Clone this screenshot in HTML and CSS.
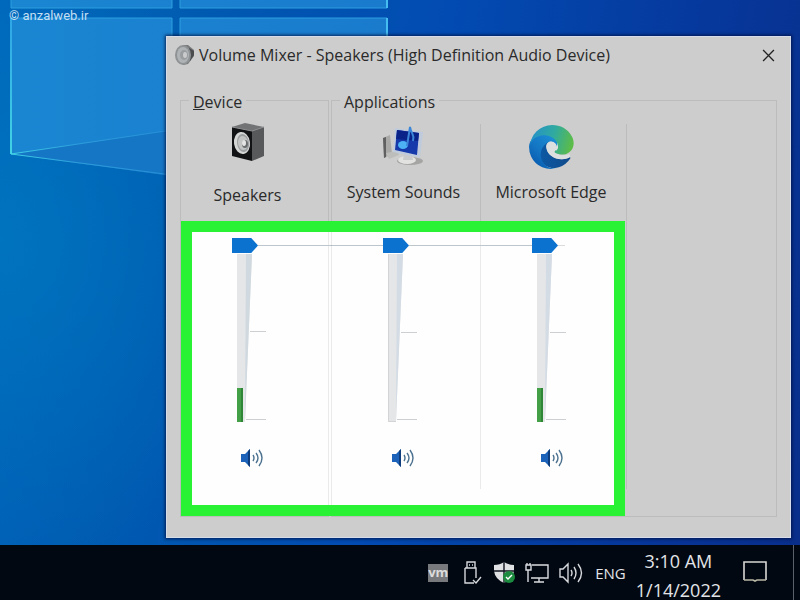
FILE: index.html
```html
<!DOCTYPE html>
<html lang="en">
<head>
<meta charset="utf-8">
<title>Volume Mixer</title>
<link rel="stylesheet" href="styles.css">
</head>
<body>
<svg class="wallpaper" viewBox="0 0 800 600" preserveAspectRatio="none" aria-hidden="true">
  <defs>
    <linearGradient id="pane" x1="0" y1="0" x2="1" y2="0">
      <stop offset="0" stop-color="#1a86d2"/>
      <stop offset="1" stop-color="#1a7bcd"/>
    </linearGradient>
    <linearGradient id="edge" x1="0" y1="18" x2="0" y2="154" gradientUnits="userSpaceOnUse">
      <stop offset="0" stop-color="#2fa5e6"/>
      <stop offset="1" stop-color="#41d3e4"/>
    </linearGradient>
    <linearGradient id="ray" x1="11" y1="0" x2="172" y2="0" gradientUnits="userSpaceOnUse">
      <stop offset="0" stop-color="#3fd0e6"/>
      <stop offset=".4" stop-color="#2c9edc"/>
      <stop offset="1" stop-color="#2590d6"/>
    </linearGradient>
  </defs>
  <path d="M11 0H172V8H11ZM180 0H387V8H180Z" fill="url(#pane)"/>
  <path d="M11 18H172V176L11 154ZM180 18H387V140H180Z" fill="url(#pane)"/>
  <path d="M11 154L172 130V176Z" fill="#1676c6"/>
  <path d="M11 154L172 130M11 154L172 175" stroke="url(#ray)" fill="none"/>
  <path d="M11 0V8H172V0M180 0V8H387V0M172 40V18H11M180 40V18H387V40" stroke="#2d9fe0" fill="none"/>
  <path d="M11 18V154" stroke="url(#edge)" stroke-width="2" fill="none"/>
  <path d="M387 0V8M387 18V40" stroke="#45bdf0" stroke-width="2" fill="none"/>
</svg>
<span class="watermark">© anzalweb.ir</span>

<main class="desktop">
  <section class="window" aria-labelledby="window-title">
    <header class="titlebar">
      <svg class="title-icon" viewBox="0 0 20 20" aria-hidden="true">
        <path d="M8 0H13L19 5V11L13 19L8 20Z" fill="#77797b"/>
        <path d="M14 3L19 6V10L15 16Z" fill="#4a4c4e"/>
        <ellipse cx="8" cy="10" rx="8" ry="10" fill="#8f9294"/>
        <ellipse cx="8" cy="10" rx="6" ry="8" fill="#b0b3b5"/>
        <ellipse cx="9" cy="10" rx="4" ry="5" fill="#999da0"/>
        <ellipse cx="10" cy="10" rx="2" ry="3" fill="#c9cbcc"/>
      </svg>
      <h1 id="window-title">Volume Mixer - Speakers (High Definition Audio Device)</h1>
      <button class="close" type="button" aria-label="Close">
        <svg viewBox="0 0 12 12"><path d="M1 1L11 11M11 1L1 11" stroke="#222" stroke-width="1.2"/></svg>
      </button>
    </header>

    <div class="mixer">
      <fieldset class="group">
        <legend><u>D</u>evice</legend>
        <div class="channel channel-device">
          <svg class="channel-icon" viewBox="0 0 46 46" aria-hidden="true">
            <path d="M7 3L20 -1L39 3L27 7Z" fill="#727375"/>
            <path d="M7 3L27 7V37L7 32Z" fill="#121314"/>
            <path d="M27 7L39 3V32L27 37Z" fill="#58595b"/>
            <path d="M7 3L27 7L39 3" stroke="#8b8c8e" fill="none"/>
            <ellipse cx="17" cy="19" rx="8" ry="11" fill="#d5d6d6" transform="rotate(-8 17 19)"/>
            <ellipse cx="18" cy="19" rx="6" ry="9" fill="#9da0a1" transform="rotate(-8 18 19)"/>
            <ellipse cx="18" cy="19" rx="5" ry="7" fill="#c2c4c4" transform="rotate(-8 18 19)"/>
            <ellipse cx="20" cy="20" rx="3" ry="4" fill="#6a6d6e"/>
            <ellipse cx="19" cy="19" rx="2" ry="3" fill="#e6e6e6"/>
          </svg>
          <label class="name" for="vol-speakers">Speakers</label>
          <div class="slider">
            <svg class="track" viewBox="0 0 36 184" aria-hidden="true">
              <path d="M26 7.5H153" stroke="#bcc6cc"/>
              <path d="M5 16H20L13 184H5Z" fill="#e5e6e8"/>
              <path d="M14 16H20L13 181Z" fill="#cfd9df"/>
              <path d="M18 93.5H34M14 181.5H34" stroke="#cdd0d2"/>
              <path d="M5 150H11V184H5Z" fill="#43a047"/>
              <path d="M9 150H11V184H9Z" fill="#2f8636"/>
            </svg>
            <input id="vol-speakers" type="range" min="0" max="100" value="100">
          </div>
          <button class="mute" type="button" aria-label="Mute Speakers">
            <svg viewBox="0 0 24 20"><path d="M1 6H5L10 1V19L5 14H1Z" fill="#1c62b8"/><path d="M8 3L10 1V19L8 17Z" fill="#0d3d7d"/><path d="M13 7Q15 10 13 13M16 5Q20 10 16 15M19 2Q25 10 19 18" stroke="#4c7290" stroke-width="1.4" fill="none"/></svg>
          </button>
        </div>
      </fieldset>

      <fieldset class="group group-apps">
        <legend>Applications</legend>
        <div class="channel">
          <svg class="channel-icon" viewBox="0 0 46 46" aria-hidden="true">
            <path d="M2 14L9 11L11 30L3 34Z" fill="#a9a9a7"/>
            <path d="M2 14L5 13V33L3 34Z" fill="#5f605f"/>
            <path d="M5 29L16 27L18 31L8 35Z" fill="#bdbdbb"/>
            <ellipse cx="29" cy="37" rx="13" ry="4" fill="#a5a5a4"/>
            <ellipse cx="26" cy="36" rx="9" ry="4" fill="#e2e2e1"/>
            <path d="M23 29L31 30L32 36H22Z" fill="#c9cacc"/>
            <path d="M14 4L42 8L39 34L12 28Z" fill="#bfcbdc"/>
            <path d="M16 6L38 9L36 31L14 26Z" fill="#1538aa"/>
            <path d="M16 6L38 9L37 17L15 15Z" fill="#0a2388"/>
            <ellipse cx="22" cy="21" rx="5" ry="4" fill="#4cb2f5"/>
            <path d="M26 22L29 3C30 10 34 10 32 17" stroke="#3b86d8" stroke-width="2" fill="none"/>
          </svg>
          <label class="name" for="vol-system">System Sounds</label>
          <div class="slider">
            <svg class="track" viewBox="0 0 36 184" aria-hidden="true">
              <path d="M26 7.5H149" stroke="#bcc6cc"/>
              <path d="M5 16H20L13 184H5Z" fill="#e5e6e8"/>
              <path d="M14 16H20L13 181Z" fill="#d3dbe4"/>
              <path d="M18 94.5H34M14 181.5H34" stroke="#cdd0d2"/>
              <path d="M5.500 16V183.500H13" stroke="#d3d4d6" fill="none"/>
            </svg>
            <input id="vol-system" type="range" min="0" max="100" value="100">
          </div>
          <button class="mute" type="button" aria-label="Mute System Sounds">
            <svg viewBox="0 0 24 20"><path d="M1 6H5L10 1V19L5 14H1Z" fill="#1c62b8"/><path d="M8 3L10 1V19L8 17Z" fill="#0d3d7d"/><path d="M13 7Q15 10 13 13M16 5Q20 10 16 15M19 2Q25 10 19 18" stroke="#4c7290" stroke-width="1.4" fill="none"/></svg>
          </button>
        </div>
        <div class="channel">
          <svg class="channel-icon" viewBox="-6 -6 268 268" aria-hidden="true">
            <defs>
              <linearGradient id="e1" x1="63" y1="177" x2="241" y2="177" gradientUnits="userSpaceOnUse"><stop offset="0" stop-color="#0c59a4"/><stop offset="1" stop-color="#114a8b"/></linearGradient>
              <linearGradient id="e2" x1="157" y1="99" x2="46" y2="220" gradientUnits="userSpaceOnUse"><stop offset="0" stop-color="#1b8bd2"/><stop offset=".6" stop-color="#1476c4"/><stop offset="1" stop-color="#0b62b4"/></linearGradient>
              <linearGradient id="e3" x1="20" y1="70" x2="245" y2="130" gradientUnits="userSpaceOnUse"><stop offset="0" stop-color="#2694c4"/><stop offset=".5" stop-color="#30aaa0"/><stop offset="1" stop-color="#5cbc48"/></linearGradient>
            </defs>
            <circle cx="146" cy="136" r="46" fill="#dcdfe0"/>
            <path fill="url(#e1)" d="M236 188a94 94 0 0 1-10 5 102 102 0 0 1-36 6c-47 0-89-32-89-74a31 31 0 0 1 16-27c-43 2-54 46-54 72 0 74 68 81 83 81 8 0 20-2 27-5l1 0a128 128 0 0 0 67-53 4 4 0 0 0-5-5z"/>
            <path fill="url(#e2)" d="M106 241a79 79 0 0 1-23-21 81 81 0 0 1 30-120c3-2 9-4 16-4a33 33 0 0 1 26 13 33 33 0 0 1 7 19c0-1 25-80-81-80-44 0-81 42-81 79a130 130 0 0 0 12 56 128 128 0 0 0 156 67 75 75 0 0 1-62-8z"/>
            <path fill="#dcdfe0" d="M113 100c-12 8-14 22-12 32 5 40 45 67 89 67 20 0 40-6 50-14l-6-16c-20 10-60 12-79-6-3-3-5-6-5-8 0-4 3-6 5-10 8-14 5-28-4-37-10-11-26-13-38-8z"/>
            <path fill="url(#e3)" d="M152 149c-1 1-3 3-3 6 0 3 2 6 5 8 15 10 43 9 43 9a62 62 0 0 0 31-9 64 64 0 0 0 32-55c0-23-8-38-12-44C227 23 182 0 134 0A128 128 0 0 0 6 126c0-36 37-66 81-66 3 0 24 0 43 10 17 9 26 20 32 30 6 11 7 25 7 30 0 6-3 14-10 19z"/>
          </svg>
          <label class="name" for="vol-edge">Microsoft Edge</label>
          <div class="slider">
            <svg class="track" viewBox="0 0 36 184" aria-hidden="true">
              <path d="M26 7.5H33" stroke="#d8dcdf"/>
              <path d="M5 16H20L13 184H5Z" fill="#e5e6e8"/>
              <path d="M14 16H20L13 181Z" fill="#d3dbe4"/>
              <path d="M18 94.5H34M14 181.5H34" stroke="#cdd0d2"/>
              <path d="M5 150H11V184H5Z" fill="#43a047"/>
              <path d="M9 150H11V184H9Z" fill="#2f8636"/>
            </svg>
            <input id="vol-edge" type="range" min="0" max="100" value="100">
          </div>
          <button class="mute" type="button" aria-label="Mute Microsoft Edge">
            <svg viewBox="0 0 24 20"><path d="M1 6H5L10 1V19L5 14H1Z" fill="#1c62b8"/><path d="M8 3L10 1V19L8 17Z" fill="#0d3d7d"/><path d="M13 7Q15 10 13 13M16 5Q20 10 16 15M19 2Q25 10 19 18" stroke="#4c7290" stroke-width="1.4" fill="none"/></svg>
          </button>
        </div>
      </fieldset>
      <div class="highlight-fill"></div>
      <div class="highlight-ring"></div>
    </div>
  </section>
</main>

<footer class="taskbar">
  <div class="tray">
    <span class="vm">vm</span>
    <svg width="20" height="24" viewBox="0 0 20 24" fill="none" stroke="#d6d8dc" stroke-width="1.4" aria-label="USB device"><path d="M4 7V1H12V7M2 7H13V17M2 7V22H11M6 4H7M9 4H10M10 19L13 22L18 16"/></svg>
    <svg width="22" height="22" viewBox="0 0 22 22" aria-label="Security"><path d="M11 0Q15 3 21 3V9Q20 17 11 21Q2 17 1 9V3Q7 3 11 0Z" fill="#e0e1e2"/><path d="M11 0V21M1 9H21" stroke="#10141f" stroke-width="1.4"/><circle cx="16" cy="15" r="6" fill="#1c8a3f"/><path d="M13 15L15 17L19 13" stroke="#fff" stroke-width="1.4" fill="none"/></svg>
    <svg width="24" height="22" viewBox="0 0 24 22" fill="none" stroke="#dadce0" stroke-width="1.4" aria-label="Network"><path d="M7 3H23V16H6M14 16V20M9 20H19M1 3H6V8H1ZM3 8V20M2 1V3M5 1V3"/></svg>
    <svg width="26" height="22" viewBox="0 0 26 22" fill="none" stroke="#d6d8dc" stroke-width="1.4" aria-label="Volume"><path d="M1 7H4L9 2V20L4 15H1ZM12 8Q14 11 12 14M15 5Q19 11 15 17M19 2Q26 11 19 20"/></svg>
    <span class="lang">ENG</span>
  </div>
  <time class="clock"><span>3:10 AM</span><span>1/14/2022</span></time>
  <svg class="notify" width="24" height="22" viewBox="0 0 24 22" fill="none" stroke="#d8d8d4" stroke-width="1.6" aria-label="Notifications"><path d="M1 19V1H23V19"/><path d="M1 19H10L12 20L14 19H23" stroke="#b9b8a4"/></svg>
  <span class="show-desktop"></span>
</footer>
</body>
</html>
```
FILE: styles.css
```css
* { box-sizing: border-box; }

body {
  margin: 0;
  min-height: 100vh;
  display: flex;
  flex-direction: column;
  position: relative;
  font-family: "Open Sans", "Noto Sans", sans-serif;
  font-size: 16px;
  line-height: 20px;
  color: #2a2a2a;
  background:
    radial-gradient(ellipse 280px 340px at 0 40%, rgba(0, 120, 192, .8), transparent),
    linear-gradient(100deg, #0064ba 0%, #005ab0 22%, #024bb2 50%, #06389c 78%, #092e8a 100%);
}

button {
  border: 0;
  padding: 0;
  background: none;
}

svg { display: block; }

.wallpaper {
  position: absolute;
  inset: 0;
  width: 100%;
  height: 100%;
}

.watermark {
  position: absolute;
  left: 9px;
  top: 6px;
  font-family: Roboto, sans-serif;
  font-size: 13px;
  color: #c4dff3;
}

.desktop {
  flex: 1;
  padding: 36px 9px 7px 166px;
  position: relative;
}

.window {
  background: #cdcdcd;
  border: 1px solid #d6dcea;
  box-shadow: 0 0 3px 1px rgba(0, 15, 60, .8);
}

.titlebar {
  display: flex;
  align-items: center;
  height: 36px;
  padding: 0 15px 0 8px;
}

.title-icon {
  width: 20px;
  height: 20px;
}

h1 {
  flex: 1;
  margin: 0 0 0 4px;
  font-size: 16px;
  font-weight: 400;
  white-space: nowrap;
}

.close svg {
  width: 13px;
  height: 13px;
}

.mixer {
  position: relative;
  display: grid;
  grid-template-columns: 149px 1fr;
  column-gap: 2px;
  padding: 15px 13px 20px;
}

.group {
  position: relative;
  z-index: 1;
  margin: 0;
  min-width: 0;
  padding: 12px 0 27px;
  border: 1px solid rgba(0, 0, 0, .08);
}

.group-apps {
  display: grid;
  grid-template-columns: 149px 146px 1fr;
}

legend {
  margin-left: 8px;
  padding: 4px 4px 0;
}

.channel {
  display: flex;
  flex-direction: column;
  align-items: center;
  padding: 0 5px 21px 0;
}

.group-apps .channel { border-right: 1px solid rgba(0, 0, 0, .08); }

.channel-device { padding-right: 14px; }

.channel-icon {
  width: 46px;
  height: 46px;
  overflow: visible;
}

.name {
  margin: 12px 0 36px;
  white-space: nowrap;
}

.channel-device .name { margin: 15px 0 33px; }

.slider {
  position: relative;
  align-self: flex-start;
  margin-left: 51px;
}

.track {
  width: 36px;
  height: 184px;
  overflow: visible;
}

.slider input {
  position: absolute;
  left: 0;
  top: 0;
  width: 26px;
  height: 184px;
  margin: 0;
  appearance: none;
  background: none;
  writing-mode: vertical-lr;
  direction: rtl;
}

.slider input::-webkit-slider-thumb {
  appearance: none;
  width: 26px;
  height: 15px;
  background: #0b72cf;
  clip-path: polygon(0 0, 74% 0, 100% 50%, 74% 100%, 0 100%);
}

.mute {
  align-self: flex-start;
  margin: 26px 0 0 59px;
}

.mute svg {
  width: 24px;
  height: 20px;
}

.highlight-fill,
.highlight-ring {
  position: absolute;
  left: 14px;
  top: 148px;
  bottom: 21px;
  width: 444px;
}

.highlight-fill { background: #fefefe; }

.highlight-ring {
  z-index: 2;
  border: 11px solid #28f233;
  pointer-events: none;
}

.taskbar {
  position: relative;
  display: flex;
  align-items: flex-start;
  height: 55px;
  padding-right: 6px;
  background: #020812;
  color: #e2e4e8;
}

.tray {
  display: flex;
  align-items: center;
  gap: 10px;
  height: 55px;
  margin-left: auto;
}

.vm {
  width: 20px;
  height: 18px;
  margin-right: 5px;
  background: #77797d;
  color: #dcdcdc;
  font-size: 13px;
  font-weight: 700;
  line-height: 16px;
  text-align: center;
}

.lang { font-size: 15px; }

.clock {
  display: flex;
  flex-direction: column;
  align-items: center;
  gap: 9px;
  margin: 6px 22px 0 10px;
  font-size: 18px;
}

.notify { margin: 16px 26px 0 0; }

.show-desktop {
  width: 1px;
  height: 55px;
  background: #5b6068;
}
```
